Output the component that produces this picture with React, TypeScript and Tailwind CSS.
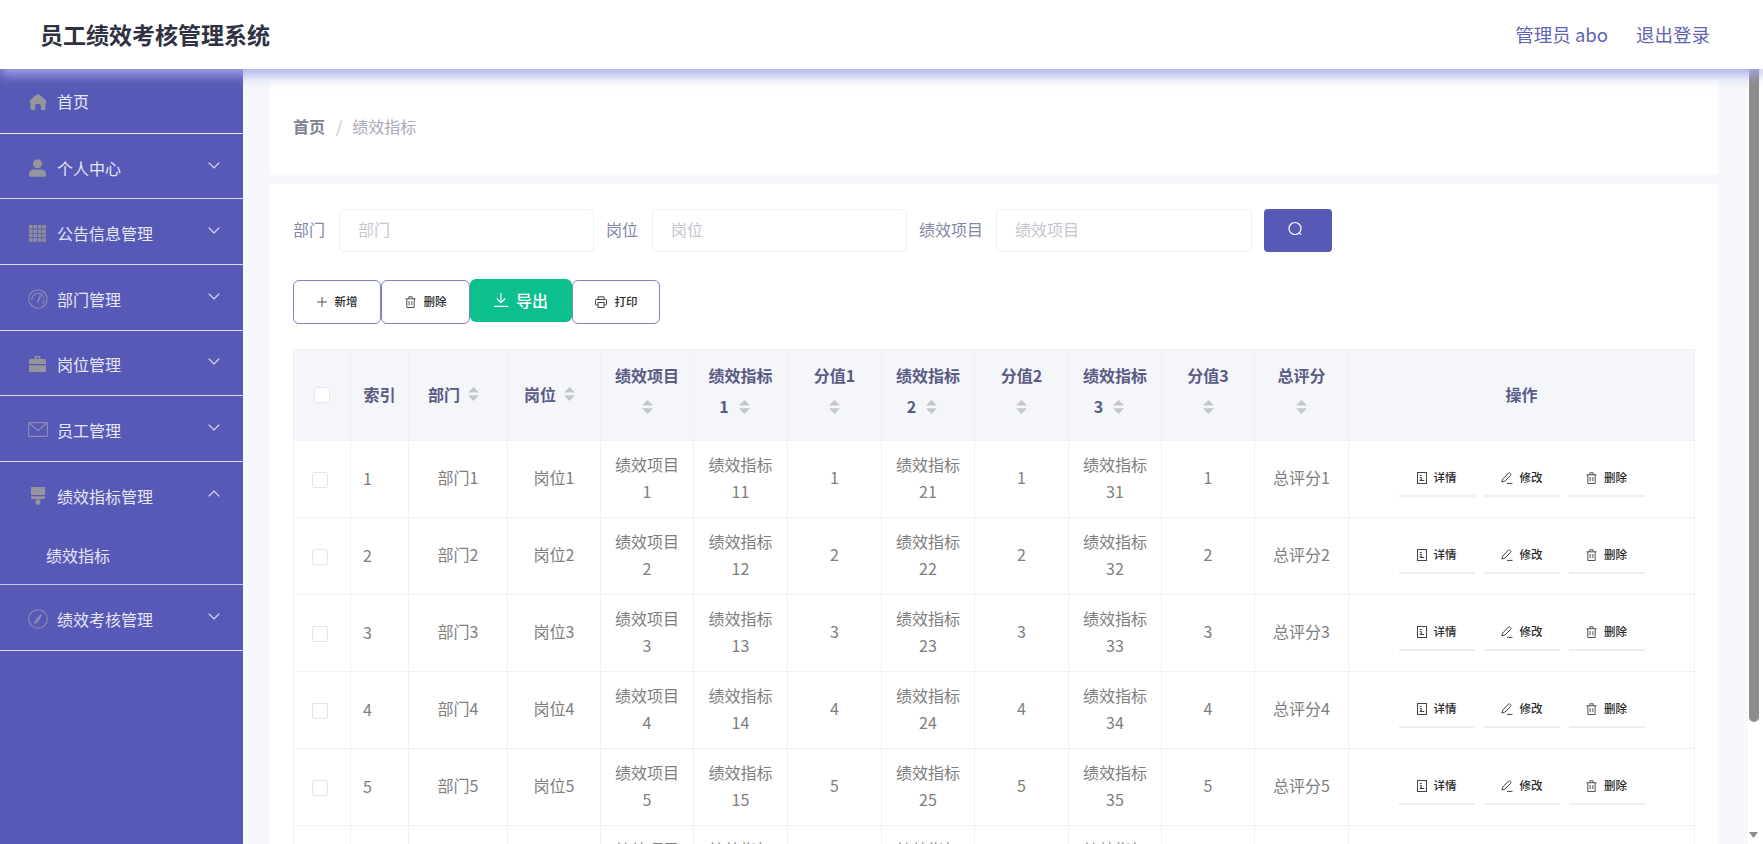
import React from "react";

const IconHome = () => (
  <svg width="18" height="16" viewBox="0 0 18 16" fill="#95959d"><path d="M9 0C6.5 1.2 2 4.8 0.6 7.2c-.5.9 0 1.6.9 1.6v6c0 .7.4 1.2 1.1 1.2h3.6v-4.6c0-.9.7-1.500 1.400-1.500h2.800c.8 0 1.400.6 1.400 1.500V16h3.600c.7 0 1.100-.5 1.100-1.200v-6c.9 0 1.400-.7.9-1.600C16 4.800 11.500 1.200 9 0z" /></svg>
);
const IconUser = () => (
  <svg width="17" height="18" viewBox="0 0 17 18" fill="#95959d"><circle cx="8.5" cy="4.7" r="4.5" /><path d="M0 15c0-3.200 2.600-4.600 5-4.600h7c2.400 0 5 1.400 5 4.600v1.300c0 .9-.6 1.400-1.400 1.400H1.400C.6 17.700 0 17.200 0 16.300z" /></svg>
);
const IconGrid = () => (
  <svg width="17" height="17" viewBox="0 0 17 17" fill="#8f8f99">
    {[0, 4.4, 8.8, 13.2].flatMap((x) => [0, 4.4, 8.8, 13.2].map((y) => <rect key={`${x}-${y}`} x={x} y={y} width="3.6" height="3.6" />))}
  </svg>
);
const IconGauge = () => (
  <svg width="20" height="20" viewBox="0 0 20 20" fill="none" stroke="#8d8db4" strokeWidth="1.1"><circle cx="10" cy="10" r="9.2" /><path d="M4 11a6 6 0 0 1 12-1.500M16 11a6 6 0 0 1-1.500 4" /><path d="M12.500 6.500 9.500 13.500" strokeWidth="1.600" /></svg>
);
const IconCase = () => (
  <svg width="17" height="16" viewBox="0 0 17 16" fill="#95959d"><path d="M5.500 3V1.300C5.500.5 6 0 6.800 0h3.400c.8 0 1.300.5 1.300 1.300V3H10V1.500H7V3z" /><path d="M0 4.500C0 3.600.6 3 1.500 3h14c.9 0 1.500.6 1.500 1.500V8H0z" /><path d="M0 9.200h17V15c0 .6-.4 1-1 1H1c-.6 0-1-.4-1-1z" /></svg>
);
const IconMail = () => (
  <svg width="20" height="15" viewBox="0 0 20 15" fill="none" stroke="#8d8db4" strokeWidth="1.100"><rect x=".6" y=".6" width="18.800" height="13.800" rx="1" /><path d="M1 1l9 7.500L19 1" /></svg>
);
const IconBrush = () => (
  <svg width="14" height="18" viewBox="0 0 14 18" fill="#95959d"><path d="M0 0h14v8H0z" /><path d="M0 9.200h14V11c0 .6-.4 1-1 1H1c-.6 0-1-.4-1-1z" /><path d="M4.500 12.500h5V15c0 1.800-1 3-2.500 3s-2.500-1.200-2.500-3z" /></svg>
);
const IconCompass = () => (
  <svg width="20" height="20" viewBox="0 0 20 20" fill="none" stroke="#8d8db4" strokeWidth="1.100"><circle cx="10" cy="10" r="9.300" /><path d="M13.500 5.500 10.500 11.500 8.500 10.300z" fill="#8d8db4" /><path d="M8.500 10.300 6.500 14.500 10.500 11.500" /></svg>
);
const Chevron = ({ up = false }: { up?: boolean }) => (
  <svg width="12" height="7" viewBox="0 0 12 7" fill="none" stroke="#dfe0f3" strokeWidth="1.200"><path d={up ? "M.7 6.300 6 1l5.300 5.300" : "M.7.700 6 6 11.300.700"} /></svg>
);

const DocIcon = () => (
  <svg width="10" height="12" viewBox="0 0 10 12" fill="none" stroke="#444" strokeWidth="1"><rect x=".5" y=".5" width="9" height="11" /><path d="M2.800 3.500h2M2.800 5.500h1.500v2.500H2.800M2.800 8.500h4.500" /></svg>
);
const EditIcon = () => (
  <svg width="12" height="12" viewBox="0 0 12 12" fill="none" stroke="#444" strokeWidth="1"><path d="M7.500 1 1.800 7 .8 10l3-.8L9.600 3.400c.6-.6.600-1.200 0-1.800l-.4-.4C8.700.7 8 .6 7.500 1z" /><path d="M6 11.400h5.500" /></svg>
);
const TrashIcon = () => (
  <svg width="11" height="12" viewBox="0 0 12 13" fill="none" stroke="#444" strokeWidth="1"><path d="M.5 3h11M2 3v9.500h8V3M4.200 3V.8h3.600V3" /><path d="M4.500 5.500v4.500M7.500 5.500v4.500" /></svg>
);
const PlusIcon = () => (
  <svg width="10" height="10" viewBox="0 0 11 11" fill="none" stroke="#444" strokeWidth="1"><path d="M5.500 0v11M0 5.500h11" /></svg>
);
const PrintIcon = () => (
  <svg width="12" height="12" viewBox="0 0 12 12" fill="none" stroke="#444" strokeWidth="1"><path d="M3 3.500V.8h6v2.700M3 9H1.200C.8 9 .5 8.700.5 8.300V4.200c0-.4.300-.7.700-.7h9.600c.4 0 .7.300.7.700v4.100c0 .4-.3.700-.7.700H9" /><rect x="3" y="6.500" width="6" height="5" /></svg>
);
const DownloadIcon = () => (
  <svg width="14" height="14" viewBox="0 0 14 14" fill="none" stroke="#fff" strokeWidth="1.100"><path d="M7 0v9.500M2.800 5.500 7 9.700l4.200-4.200M0 13.400h14" /></svg>
);
const SearchIcon = () => (
  <svg width="16" height="16" viewBox="0 0 16 16" fill="none" stroke="#fff" strokeWidth="1.200"><circle cx="8" cy="7.500" r="6" /><path d="M12.500 12 14 13.600" /></svg>
);
const Caret = () => (
  <svg width="11" height="14" viewBox="0 0 11 14" fill="#c3c6ce" className="inline-block shrink-0"><path d="M5.500 0 11 5.500H0z" /><path d="M0 8.300h11L5.500 14z" /></svg>
);

const menus = [
  { name: "个人中心", icon: <IconUser /> },
  { name: "公告信息管理", icon: <IconGrid /> },
  { name: "部门管理", icon: <IconGauge /> },
  { name: "岗位管理", icon: <IconCase /> },
  { name: "员工管理", icon: <IconMail /> },
];

function MenuRow({ name, icon, up = false, className = "" }: { name: string; icon: React.ReactNode; up?: boolean; className?: string }) {
  return (
    <div className={`flex h-[65.6px] items-center pl-[27px] pr-[23px] ${className}`}>
      <span className="flex w-[21px] justify-center pt-[3px]">{icon}</span>
      <span className="ml-[9px] pt-[3px] text-[16px] leading-[24px] text-[#e6e6f5]">{name}</span>
      <span className="ml-auto flex pb-[2px]"><Chevron up={up} /></span>
    </div>
  );
}

function Sidebar() {
  return (
    <aside className="w-[243px] shrink-0 bg-[#5659b5]">
      <div className="flex h-[64.8px] items-center border-b border-[#e8e8f6] pl-[27px]">
        <span className="flex w-[21px] justify-center pt-[3px]"><IconHome /></span>
        <span className="ml-[9px] text-[16px] leading-[24px] text-[#e6e6f5]">首页</span>
      </div>
      {menus.map((m) => (
        <MenuRow key={m.name} name={m.name} icon={m.icon} className="border-b border-[#dcdcf1]" />
      ))}
      <MenuRow name="绩效指标管理" icon={<IconBrush />} up />
      <div className="flex h-[58px] items-start border-b border-[#c4c5e8] pl-[46px] pt-[16px] text-[16px] leading-[24px] text-[#e6e6f5]">绩效指标</div>
      <MenuRow name="绩效考核管理" icon={<IconCompass />} className="border-b border-[#dcdcf1]" />
    </aside>
  );
}

function Field({ label, placeholder, labelW, inputW }: { label: string; placeholder: string; labelW: string; inputW: string }) {
  return (
    <div className="flex items-center">
      <span className={`${labelW} pb-[3px] text-[16px] text-[#8487a8]`}>{label}</span>
      <input placeholder={placeholder} className={`${inputW} h-[43px] rounded border border-[#eef0f4] bg-white pb-[3px] pl-[18px] text-[16px] outline-none placeholder:text-[#c4c6cf]`} />
    </div>
  );
}

function OutlineBtn({ icon, label, w }: { icon: React.ReactNode; label: string; w: string }) {
  return (
    <button className={`${w} flex h-[44px] items-center justify-center gap-[8px] rounded-[6px] border border-[#8082c6] bg-white pb-[1px] text-[11.500px] font-medium text-[#2b2b2b]`}>
      {icon}
      <span>{label}</span>
    </button>
  );
}

const colClasses = ["w-[57px]", "w-[58px]", "w-[99px]", "w-[93px]", "w-[93px]", "w-[94px]", "w-[94px]", "w-[93px]", "w-[94px]", "w-[93px]", "w-[93px]", "w-[94px]", "w-[346px]"];

function Th({ first, second, caretInline }: { first: string; second?: string; caretInline?: boolean }) {
  if (caretInline) {
    return (
      <th className="border border-[#f0f1f5] bg-[#f5f6fa] p-0 pb-[2px] pr-[9px] text-[16px] font-bold text-[#5a5b85]">
        <div className="flex items-center justify-center gap-[8px]"><span>{first}</span><Caret /></div>
      </th>
    );
  }
  return (
    <th className="border border-[#f0f1f5] bg-[#f5f6fa] p-0 pb-[8px] text-[16px] font-bold leading-[31px] text-[#5a5b85]">
      <div>{first}</div>
      <div className={`flex min-h-[31px] items-center justify-center ${second ? "gap-[10px] pr-[12px]" : ""}`}>{second && <span>{second}</span>}<Caret /></div>
    </th>
  );
}

function ActionBtn({ icon, label }: { icon: React.ReactNode; label: string }) {
  return (
    <button className="flex h-[37px] w-[76px] items-center justify-center gap-[7px] border-b-2 border-[#eeeeee] text-[11.500px] font-medium text-[#2b2b2b]">
      {icon}
      <span>{label}</span>
    </button>
  );
}

function Td({ children }: { children: React.ReactNode }) {
  return <td className="border border-[#f0f1f5] p-0 px-[8px] pb-[3px] text-center text-[16px] leading-[27px] text-[#7e7e7e]">{children}</td>;
}

function Row({ n }: { n: number }) {
  return (
    <tr className="h-[77px]">
      <td className="border border-[#f0f1f5] p-0 pl-[18px] pt-[1px]">
        <div className="h-[16px] w-[16px] rounded-[2px] border border-[#e4e5ea] bg-white" />
      </td>
      <td className="border border-[#f0f1f5] p-0 pb-[2px] pl-[12px] text-[16px] text-[#7e7e7e]">{n}</td>
      <Td>部门{n}</Td>
      <Td>岗位{n}</Td>
      <Td>绩效项目<br />{n}</Td>
      <Td>绩效指标<br />1{n}</Td>
      <Td>{n}</Td>
      <Td>绩效指标<br />2{n}</Td>
      <Td>{n}</Td>
      <Td>绩效指标<br />3{n}</Td>
      <Td>{n}</Td>
      <Td>总评分{n}</Td>
      <td className="border border-[#f0f1f5] p-0">
        <div className="flex justify-center gap-[9px] pb-[1px]">
          <ActionBtn icon={<DocIcon />} label="详情" />
          <ActionBtn icon={<EditIcon />} label="修改" />
          <ActionBtn icon={<TrashIcon />} label="删除" />
        </div>
      </td>
    </tr>
  );
}

export default function App() {
  return (
    <div className="flex h-screen w-full flex-col overflow-hidden bg-white [font-family:'Noto_Sans_CJK_SC','Noto_Sans',sans-serif]">
      <header className="relative z-10 flex h-[69px] shrink-0 items-center justify-between bg-white pl-[40px] pr-[53px] shadow-[0_6px_12px_rgba(166,170,236,0.95)]">
        <h1 className="text-[23px] font-bold text-[#2f3242]">员工绩效考核管理系统</h1>
        <div className="flex items-center gap-[28px] text-[18.500px] text-[#6164b2]">
          <span>管理员 abo</span>
          <span>退出登录</span>
        </div>
      </header>
      <div className="flex min-h-0 flex-1">
        <Sidebar />
        <main className="min-w-0 flex-1 overflow-hidden bg-[#f6f8fb] pl-[27px] pr-[30px] pt-[11px]">
          <div className="flex h-[94px] items-center bg-white px-[23px] pb-[2px] text-[16px]">
            <span className="font-bold text-[#7f8291]">首页</span>
            <span className="ml-[11px] text-[#c0c4cc]">/</span>
            <span className="ml-[10px] text-[#a8abb9]">绩效指标</span>
          </div>
          <div className="mt-[10px] bg-white pl-[23px] pr-[24px] pt-[25px]">
            <div className="flex items-center">
              <Field label="部门" placeholder="部门" labelW="w-[46px]" inputW="w-[255px]" />
              <div className="ml-[12px]"><Field label="岗位" placeholder="岗位" labelW="w-[46px]" inputW="w-[255px]" /></div>
              <div className="ml-[12px]"><Field label="绩效项目" placeholder="绩效项目" labelW="w-[77px]" inputW="w-[256px]" /></div>
              <button className="ml-[12px] flex h-[43px] w-[68px] items-center justify-center rounded bg-[#5659b5] pb-[3px] pr-[6px]"><SearchIcon /></button>
            </div>
            <div className="mt-[28px] flex items-start">
              <OutlineBtn icon={<PlusIcon />} label="新增" w="w-[88px]" />
              <OutlineBtn icon={<TrashIcon />} label="删除" w="w-[89px]" />
              <button className="-mt-[1px] flex h-[43px] w-[102px] items-center justify-center gap-[8px] rounded-[6px] bg-[#0cc08e] pb-[2px] text-[16px] font-medium text-white">
                <DownloadIcon />
                <span>导出</span>
              </button>
              <OutlineBtn icon={<PrintIcon />} label="打印" w="w-[88px]" />
            </div>
            <table className="mt-[25px] w-[1401px] table-fixed border-collapse">
              <colgroup>
                {colClasses.map((c, i) => <col key={i} className={c} />)}
              </colgroup>
              <thead>
                <tr className="h-[91px]">
                  <th className="border border-[#f0f1f5] bg-[#f5f6fa] p-0"><div className="mx-auto h-[16px] w-[16px] rounded-[2px] border border-[#e6e8ee] bg-white" /></th>
                  <th className="border border-[#f0f1f5] bg-[#f5f6fa] p-0 pb-[2px] text-[16px] font-bold text-[#5a5b85]">索引</th>
                  <Th first="部门" caretInline />
                  <Th first="岗位" caretInline />
                  <Th first="绩效项目" />
                  <Th first="绩效指标" second="1" />
                  <Th first="分值1" />
                  <Th first="绩效指标" second="2" />
                  <Th first="分值2" />
                  <Th first="绩效指标" second="3" />
                  <Th first="分值3" />
                  <Th first="总评分" />
                  <th className="border border-[#f0f1f5] bg-[#f5f6fa] p-0 pb-[2px] text-[16px] font-bold text-[#5a5b85]">操作</th>
                </tr>
              </thead>
              <tbody>
                {[1, 2, 3, 4, 5, 6].map((n) => <Row key={n} n={n} />)}
              </tbody>
            </table>
          </div>
        </main>
        <div className="flex w-[15px] shrink-0 flex-col bg-white pl-[1px]">
          <div className="h-[653px] w-[10px] rounded-b-[5px] bg-[#8c8c8c]" />
          <svg width="9" height="6" viewBox="0 0 9 6" fill="#8c8c8c" className="mt-[110px]"><path d="M0 0h9L4.500 6z" /></svg>
        </div>
      </div>
    </div>
  );
}
